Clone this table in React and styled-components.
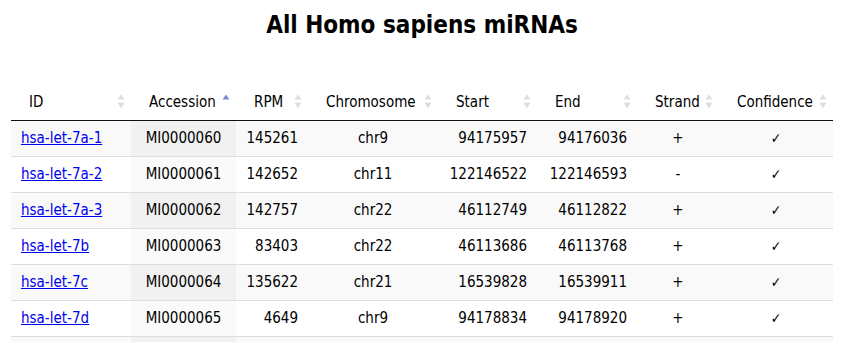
import React from "react";
import styled, { createGlobalStyle } from "styled-components";

const GlobalStyle = createGlobalStyle`
  html, body {
    margin: 0;
    padding: 0;
    background: #fff;
  }
  body {
    font-family: Tahoma, "DejaVu Sans Condensed", "Noto Sans", sans-serif;
    color: #000;
  }
`;

const Page = styled.div`
  padding: 0 21px 0 11px;
`;

const Title = styled.h2`
  margin: 11px 0 41px;
  font-size: 24px;
  line-height: 28px;
  font-weight: bold;
  text-align: center;
`;

const Table = styled.table`
  width: 822px;
  table-layout: fixed;
  border-collapse: separate;
  border-spacing: 0;
  font-size: 15px;
`;

const HeadCell = styled.th`
  position: relative;
  padding: 12px 18px 8px;
  line-height: 20px;
  font-weight: normal;
  text-align: left;
  white-space: nowrap;
  border-bottom: 1px solid #111;
`;

const SortIcon = styled.svg`
  position: absolute;
  right: 6px;
  top: 50%;
  transform: translateY(-40%);
`;

const Row = styled.tr`
  background: ${(p) => (p.$odd ? "#f9f9f9" : "#fff")};
`;

const Cell = styled.td`
  padding: 8px 10px;
  line-height: 19px;
  text-align: ${(p) => p.$align || "left"};
  white-space: nowrap;
  border-top: ${(p) => (p.$first ? "none" : "1px solid #ddd")};
  background: ${(p) =>
    p.$sorted ? (p.$odd ? "#f1f1f1" : "#fafafa") : "transparent"};
`;

const Check = styled.span`
  font-size: 14px;
`;

const Link = styled.a`
  color: #0000ee;
  text-decoration: underline;
`;

const columns = [
  { label: "ID", width: 120 },
  { label: "Accession", width: 105, sort: "asc" },
  { label: "RPM", width: 72 },
  { label: "Chromosome", width: 130 },
  { label: "Start", width: 99 },
  { label: "End", width: 100 },
  { label: "Strand", width: 82 },
  { label: "Confidence", width: 114 },
];

const rows = [
  ["hsa-let-7a-1", "MI0000060", "145261", "chr9", "94175957", "94176036", "+"],
  ["hsa-let-7a-2", "MI0000061", "142652", "chr11", "122146522", "122146593", "-"],
  ["hsa-let-7a-3", "MI0000062", "142757", "chr22", "46112749", "46112822", "+"],
  ["hsa-let-7b", "MI0000063", "83403", "chr22", "46113686", "46113768", "+"],
  ["hsa-let-7c", "MI0000064", "135622", "chr21", "16539828", "16539911", "+"],
  ["hsa-let-7d", "MI0000065", "4649", "chr9", "94178834", "94178920", "+"],
  ["hsa-let-7e", "MI0000066", "26780", "chr19", "51692786", "51692864", "+"],
];

const Sorter = ({ dir }) =>
  dir === "asc" ? (
    <SortIcon width="8" height="15" viewBox="0 0 8 15">
      <path d="M4 0.5 L7.5 5.5 L0.5 5.5 Z" fill="#7f86d5" />
    </SortIcon>
  ) : (
    <SortIcon width="8" height="15" viewBox="0 0 8 15">
      <path d="M4 0.5 L7.5 5.5 L0.5 5.5 Z" fill="#dedede" />
      <path d="M4 14.5 L7.5 8.5 L0.5 8.5 Z" fill="#dedede" />
    </SortIcon>
  );

const App = () => (
  <Page>
    <GlobalStyle />
    <Title>All Homo sapiens miRNAs</Title>
    <Table>
      <colgroup>
        {columns.map((c) => (
          <col key={c.label} style={{ width: c.width }} />
        ))}
      </colgroup>
      <thead>
        <tr>
          {columns.map((c) => (
            <HeadCell key={c.label}>
              {c.label}
              <Sorter dir={c.sort} />
            </HeadCell>
          ))}
        </tr>
      </thead>
      <tbody>
        {rows.map((r, i) => {
          const odd = i % 2 === 0;
          const first = i === 0;
          return (
            <Row key={r[0]} $odd={odd}>
              <Cell $first={first}>
                <Link href="#">{r[0]}</Link>
              </Cell>
              <Cell $first={first} $odd={odd} $sorted $align="center">
                {r[1]}
              </Cell>
              <Cell $first={first} $align="right">{r[2]}</Cell>
              <Cell $first={first} $align="center">{r[3]}</Cell>
              <Cell $first={first} $align="right">{r[4]}</Cell>
              <Cell $first={first} $align="right">{r[5]}</Cell>
              <Cell $first={first} $align="center">{r[6]}</Cell>
              <Cell $first={first} $align="center">
                <Check>✓</Check>
              </Cell>
            </Row>
          );
        })}
      </tbody>
    </Table>
  </Page>
);

export default App;
